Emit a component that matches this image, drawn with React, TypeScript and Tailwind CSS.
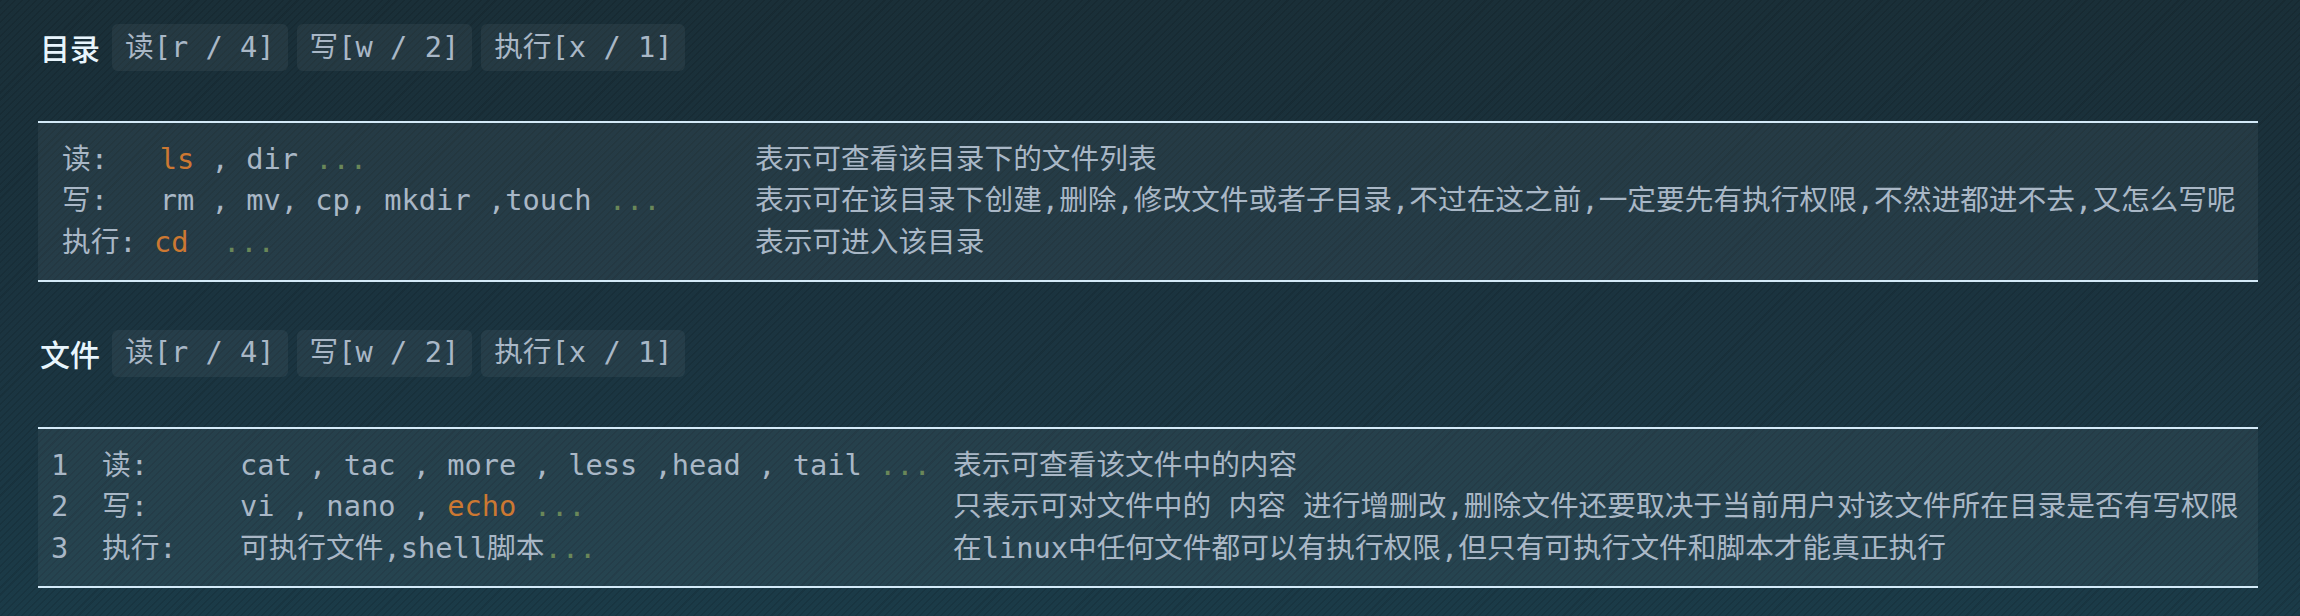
const mono = "font-['DejaVu_Sans_Mono','Noto_Sans_CJK_SC',monospace]";

function Chip({ children }: { children: string }) {
  return (
    <span
      className={`${mono} whitespace-pre rounded-[6px] bg-white/[0.05] px-[13px] py-[2.5px] text-[28.7px] leading-[41.7px] text-[#a9b7c6]`}
    >
      {children}
    </span>
  );
}

function Heading({ title }: { title: string }) {
  return (
    <div className="flex items-center gap-[9px]">
      <h2 className="mr-[3px] pl-[2px] font-['Noto_Sans_CJK_SC',sans-serif] text-[30px] font-medium leading-[46.7px] text-[#e8f5fd]">
        {title}
      </h2>
      <Chip>读[r / 4]</Chip>
      <Chip>写[w / 2]</Chip>
      <Chip>执行[x / 1]</Chip>
    </div>
  );
}

const Or = ({ children }: { children: string }) => (
  <span className="text-[#cc7832]">{children}</span>
);
const Gr = ({ children }: { children: string }) => (
  <span className="text-[#6a8759]">{children}</span>
);

export default function App() {
  return (
    <div className="min-h-[616px] w-full bg-[image:repeating-linear-gradient(135deg,rgba(0,0,0,0.1)_0px,rgba(0,0,0,0.1)_1.5px,transparent_1.5px,transparent_5px),linear-gradient(180deg,#1a2f38_0%,#1b3440_55%,#1b3b48_100%)] pl-[38px] pr-[42px] pt-[24px] pb-[29px]">
      <Heading title="目录" />

      <div
        className={`${mono} mt-[50px] border-y-2 border-[#d4eaf8] bg-white/[0.05] py-[16px] pl-[24px] text-[28.7px] leading-[41.7px] text-[#a9b7c6]`}
      >
        <div className="grid grid-cols-[693px_1fr] whitespace-pre">
          <div>
            读:   <Or>ls</Or> , dir <Gr>...</Gr>
          </div>
          <div>表示可查看该目录下的文件列表</div>
          <div>
            写:   rm , mv, cp, mkdir ,touch <Gr>...</Gr>
          </div>
          <div>
            表示可在该目录下创建,删除,修改文件或者子目录,不过在这之前,一定要先有执行权限,不然进都进不去,又怎么写呢
          </div>
          <div>
            执行: <Or>cd</Or>  <Gr>...</Gr>
          </div>
          <div>表示可进入该目录</div>
        </div>
      </div>

      <div className="mt-[48px]">
        <Heading title="文件" />
      </div>

      <div
        className={`${mono} mt-[50px] border-y-2 border-[#d4eaf8] bg-white/[0.05] py-[16px] pl-[13px] text-[28.7px] leading-[41.7px] text-[#a9b7c6]`}
      >
        <div className="grid grid-cols-[51px_138px_713px_1fr] whitespace-pre">
          <div>1</div>
          <div>读:</div>
          <div>
            cat , tac , more , less ,head , tail <Gr>...</Gr>
          </div>
          <div>表示可查看该文件中的内容</div>

          <div>2</div>
          <div>写:</div>
          <div>
            vi , nano , <Or>echo</Or> <Gr>...</Gr>
          </div>
          <div>
            只表示可对文件中的 内容 进行增删改,删除文件还要取决于当前用户对该文件所在目录是否有写权限
          </div>

          <div>3</div>
          <div>执行:</div>
          <div>
            可执行文件,shell脚本<Gr>...</Gr>
          </div>
          <div>在linux中任何文件都可以有执行权限,但只有可执行文件和脚本才能真正执行</div>
        </div>
      </div>
    </div>
  );
}
